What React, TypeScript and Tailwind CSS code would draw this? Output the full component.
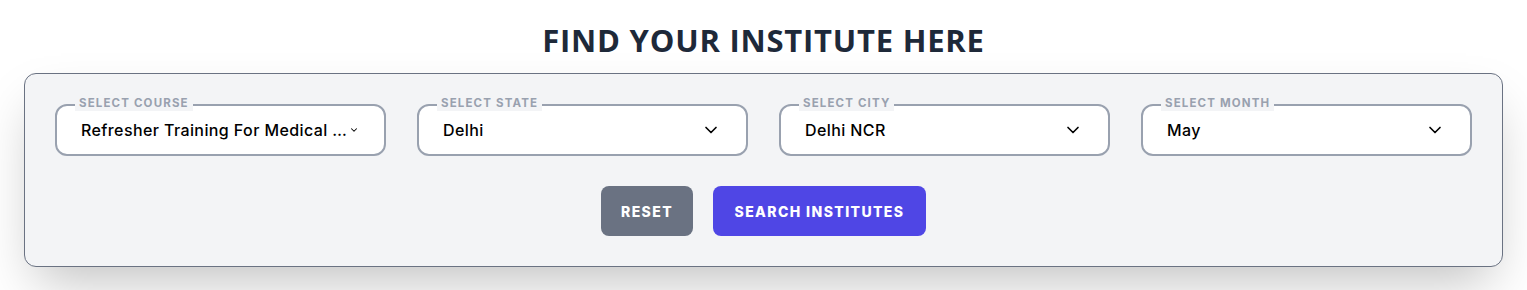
import { ChevronDown } from 'lucide-react'

const fields = [
  { label: 'SELECT COURSE', value: 'Refresher Training For Medical First Aid Course', small: true },
  { label: 'SELECT STATE', value: 'Delhi' },
  { label: 'SELECT CITY', value: 'Delhi NCR' },
  { label: 'SELECT MONTH', value: 'May' },
]

function SelectBox({ label, value, small }: { label: string; value: string; small?: boolean }) {
  return (
    <div className="relative">
      <span className="absolute -top-[9px] left-5 bg-gray-100 px-1 text-[11.5px] font-bold leading-4 tracking-[0.1em] text-gray-400">
        {label}
      </span>
      <div className="flex h-[52px] items-center rounded-xl border-2 border-gray-400 bg-white pl-6 pr-[25px]">
        <span className="min-w-0 flex-1 truncate text-[16px] font-medium tracking-[0.025em] text-black">{value}</span>
        {small ? (
          <ChevronDown className="ml-0.5 h-2.5 w-2.5 shrink-0 text-black" strokeWidth={2.5} />
        ) : (
          <ChevronDown className="h-5 w-5 shrink-0 text-black" strokeWidth={2} />
        )}
      </div>
    </div>
  )
}

export default function App() {
  return (
    <div className="min-h-screen bg-white px-6 pt-[22px]" style={{ fontFamily: 'Inter, "Noto Sans", sans-serif' }}>
      <h1
        className="mb-[15px] text-center text-[31px] font-bold leading-9 tracking-[0.025em] text-gray-800"
        style={{ fontFamily: '"Open Sans", Inter, sans-serif' }}
      >
        FIND YOUR INSTITUTE HERE
      </h1>

      <div className="rounded-xl border border-gray-500 bg-gray-100 px-[30px] py-[30px] shadow-2xl">
        <div className="grid grid-cols-4 gap-[31px]">
          {fields.map(f => (
            <SelectBox key={f.label} label={f.label} value={f.value} small={f.small} />
          ))}
        </div>

        <div className="mt-[30px] flex justify-center gap-5">
          <button className="h-[50px] w-[92px] rounded-lg bg-gray-500 text-[14px] font-extrabold tracking-[0.1em] text-white">
            RESET
          </button>
          <button className="h-[50px] w-[213px] rounded-lg bg-[#4f46e5] text-[14px] font-extrabold tracking-[0.1em] text-white">
            SEARCH INSTITUTES
          </button>
        </div>
      </div>
    </div>
  )
}
